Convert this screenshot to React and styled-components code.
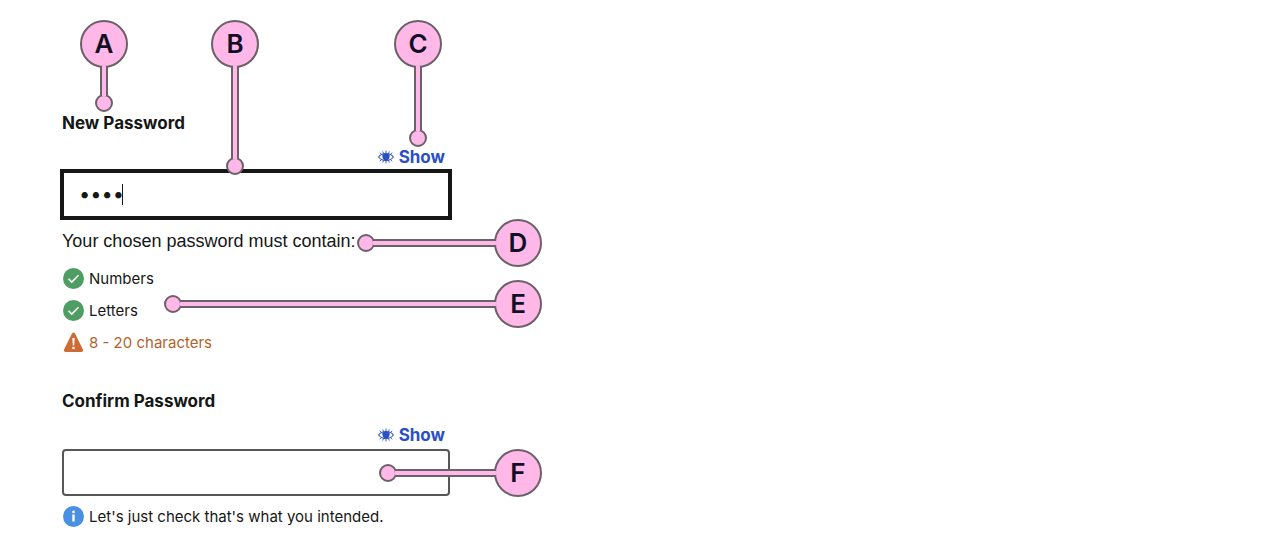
import React from "react";
import styled, { createGlobalStyle, css } from "styled-components";

const GlobalStyle = createGlobalStyle`
  *, *::before, *::after { box-sizing: border-box; }
  body {
    margin: 0;
    background: #fff;
    color: #151716;
    font-family: Inter, "Liberation Sans", sans-serif;
  }
`;

const Page = styled.main`
  padding: 112px 62px 11px;
`;

const Figure = styled.div`
  position: relative;
  width: 100%;
  max-width: 388px;
`;

const Form = styled.form`
  display: flex;
  flex-direction: column;
  gap: 32px;
`;

const Group = styled.div`
  display: flex;
  flex-direction: column;
`;

const Label = styled.label`
  font-size: 17px;
  font-weight: 700;
  line-height: 22px;
`;

const ShowButton = styled.button`
  display: flex;
  align-items: center;
  align-self: flex-end;
  gap: 5px;
  margin: 12px 5px 3px 0;
  padding: 0;
  border: 0;
  background: none;
  color: #2b4fc4;
  font: inherit;
  font-size: 17px;
  font-weight: 700;
  line-height: 22px;
  cursor: pointer;
`;

const Field = styled.div`
  position: relative;
  display: flex;
  height: 47px;
`;

const Input = styled.input`
  flex: 1;
  min-width: 0;
  padding: 0 15px 2px;
  border: 2px solid #55565a;
  border-radius: 4px;
  outline: 0;
  background: #fff;
  color: #151716;
  font-family: inherit;
  font-size: 20px;
  ${({ $active }) =>
    $active &&
    css`
      margin: -2px;
      border: 4px solid #151716;
      border-radius: 0;
    `}
`;

const Caret = styled.span`
  position: absolute;
  top: 13px;
  left: 60px;
  width: 1px;
  height: 21px;
  background: #151716;
`;

const Help = styled.p`
  margin: 12px 0 10px;
  font-family: "Liberation Sans", Arial, sans-serif;
  font-size: 18px;
  line-height: 22px;
  white-space: nowrap;
`;

const Rules = styled.ul`
  margin: 0;
  padding: 0;
  list-style: none;
`;

const Rule = styled.li`
  display: flex;
  align-items: center;
  gap: 5px;
  height: 32px;
  padding-left: 1px;
  color: ${({ $warning }) => ($warning ? "#b5622a" : "inherit")};
  font-size: 15px;
  white-space: nowrap;
`;

const Hint = styled(Rule).attrs({ as: "div" })`
  margin-top: 4px;
`;

const StatusIcon = styled.svg`
  flex: none;
  width: 21px;
  height: 21px;
`;

const EyeSvg = styled.svg`
  flex: none;
  width: 16px;
  height: 14px;
`;

const Callout = styled.div`
  position: absolute;
  top: ${({ $top }) => $top}px;
  left: ${({ $left }) => $left}px;
  display: flex;
  align-items: center;
  flex-direction: ${({ $side }) => ($side ? "row-reverse" : "column")};
  pointer-events: none;
`;

const Badge = styled.span`
  display: flex;
  align-items: center;
  justify-content: center;
  width: 48px;
  height: 48px;
  border: 2px solid #6b6169;
  border-radius: 50%;
  background: #ffb8e8;
  color: #130f25;
  font-size: 26px;
  font-weight: 600;
  line-height: 32px;
`;

const Stem = styled.span`
  z-index: 1;
  background: #ffb8e8;
  border: 0 solid #6b6169;
  ${({ $side, $length }) =>
    $side
      ? css`
          width: ${$length}px;
          height: 8px;
          margin: 0 -2px;
          border-width: 2px 0;
        `
      : css`
          width: 8px;
          height: ${$length}px;
          margin: -2px 0;
          border-width: 0 2px;
        `}
`;

const Dot = styled.span`
  width: 18px;
  height: 18px;
  border: 2px solid #6b6169;
  border-radius: 50%;
  background: #ffb8e8;
`;

function EyeIcon() {
  return (
    <EyeSvg viewBox="0 0 16 14" fill="none" stroke="currentColor" aria-hidden="true">
      <path d="M.6 7C4 2.4 12 2.4 15.4 7C12 11.6 4 11.6 .6 7Z" strokeWidth="1.1" />
      <path d="M8 .6v3M4.7 1.4l.8 2.4M11.3 1.4l-.8 2.4M8 10v3.4M4.7 12.6l.8-2.4M11.3 12.6l-.8-2.4M1.9 2.7l1.6 1.9M14.1 2.7l-1.6 1.9M1.9 11.3l1.6-1.9M14.1 11.3l-1.6-1.9" strokeWidth=".9" />
      <path d="M4.3 4.5Q8 2.8 11.7 4.5Q12 10.6 8 10.6Q4 10.6 4.3 4.5Z" fill="currentColor" stroke="none" />
    </EyeSvg>
  );
}

function CheckIcon() {
  return (
    <StatusIcon viewBox="0 0 21 21" aria-hidden="true">
      <circle cx="10.5" cy="10.5" r="10.5" fill="#4e9d62" />
      <path d="M5.5 10.8l3.3 3.3 6.7-6.8" fill="none" stroke="#fff" strokeWidth="1.5" />
    </StatusIcon>
  );
}

function WarningIcon() {
  return (
    <StatusIcon viewBox="0 0 21 21" aria-hidden="true">
      <path d="M9 1.4Q10.5-.6 12 1.4L19.8 17.2Q20.8 20 18.4 20H2.6Q.2 20 1.2 17.2Z" fill="#cf6a32" />
      <path d="M9.3 6h2.4l-.5 7.5H9.8Z" fill="#fff" />
      <circle cx="10.5" cy="16" r="1.3" fill="#fff" />
    </StatusIcon>
  );
}

function InfoIcon() {
  return (
    <StatusIcon viewBox="0 0 21 21" aria-hidden="true">
      <circle cx="10.5" cy="10.5" r="10.5" fill="#4a90e2" />
      <circle cx="10.5" cy="5.9" r="1.3" fill="#fff" />
      <path d="M9.3 8.5h2.4v7H9.3z" fill="#fff" />
    </StatusIcon>
  );
}

const callouts = [
  { name: "A", left: 18, top: -92, length: 30 },
  { name: "B", left: 149, top: -92, length: 93 },
  { name: "C", left: 332, top: -92, length: 65 },
  { name: "D", left: 295, top: 107, length: 123, side: true },
  { name: "E", left: 102, top: 168, length: 316, side: true },
  { name: "F", left: 317, top: 337, length: 101, side: true },
];

export default function App() {
  return (
    <Page>
      <GlobalStyle />
      <Figure>
        <Form>
          <Group>
            <Label htmlFor="new-password">New Password</Label>
            <ShowButton type="button">
              <EyeIcon />
              Show
            </ShowButton>
            <Field>
              <Input id="new-password" type="password" defaultValue="1234" aria-describedby="rules" $active />
              <Caret />
            </Field>
            <Help>Your chosen password must contain:</Help>
            <Rules id="rules">
              <Rule><CheckIcon />Numbers</Rule>
              <Rule><CheckIcon />Letters</Rule>
              <Rule $warning><WarningIcon />8 - 20 characters</Rule>
            </Rules>
          </Group>
          <Group>
            <Label htmlFor="confirm-password">Confirm Password</Label>
            <ShowButton type="button">
              <EyeIcon />
              Show
            </ShowButton>
            <Field>
              <Input id="confirm-password" type="password" aria-describedby="confirm-hint" />
            </Field>
            <Hint id="confirm-hint"><InfoIcon />Let's just check that's what you intended.</Hint>
          </Group>
        </Form>
        {callouts.map(({ name, left, top, length, side }) => (
          <Callout key={name} $left={left} $top={top} $side={side}>
            <Badge>{name}</Badge>
            <Stem $side={side} $length={length} />
            <Dot />
          </Callout>
        ))}
      </Figure>
    </Page>
  );
}
